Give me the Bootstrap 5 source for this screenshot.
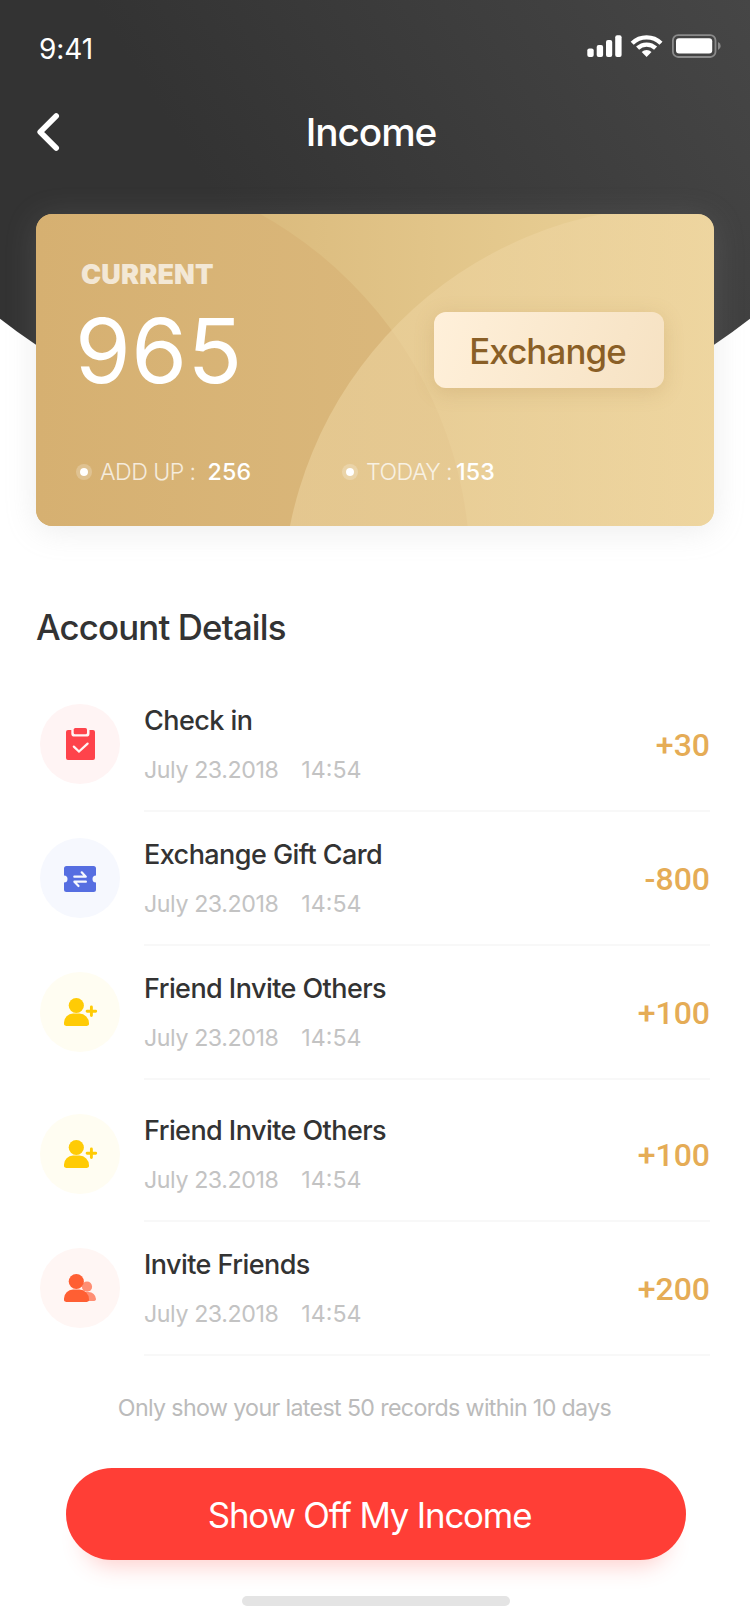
<!DOCTYPE html>
<html lang="en">
<head>
<meta charset="utf-8">
<meta name="viewport" content="width=device-width, initial-scale=1">
<title>Income</title>
<link href="https://cdn.jsdelivr.net/npm/bootstrap@5.3.0/dist/css/bootstrap.min.css" rel="stylesheet">
<style>
  body { font-family: Inter, "Liberation Sans", sans-serif; color: #333; background: #fff; }
  .screen { width: 750px; height: 1624px; }

  /* dark header with a curved lower edge */
  .hero { height: 448px; color: #fff; background: linear-gradient(238deg, #464646 0%, #333 64%); clip-path: circle(609px at 375px -161px); }
  .status-bar { padding: 29px 28px 0 39px; height: 104px; }
  .status-icons { margin-top: 3px; }
  .clock { font-size: 28px; line-height: 41px; letter-spacing: -.1px; }
  .title-bar { height: 56px; padding-left: 36px; }
  .page-title { font-size: 38.8px; line-height: 56px; font-weight: 500; letter-spacing: -1.04px; padding-right: 68px; }

  /* balance card */
  .balance { height: 312px; margin: -234px 36px 0; border: 0; border-radius: 16px; overflow: visible; color: #fff;
    background: linear-gradient(90deg, #d3af6f 0%, #ecd49b 100%); box-shadow: 0 4px 32px rgba(158,158,158,.2); }
  .balance-art { position: absolute; inset: 0; border-radius: 16px; }
  .balance-body { position: relative; padding: 45px 50px 0 39px; }
  .label-current { font-size: 27px; line-height: 32px; font-weight: 900; letter-spacing: .16px; opacity: .7; padding-left: 6px; margin-bottom: 10px; }
  .amount-now { font-size: 90px; line-height: 100px; font-weight: 400; letter-spacing: .5px; }
  .btn-exchange { width: 230px; height: 76px; margin-top: 53px; padding: 2px 3px 0 0; border: 0; border-radius: 12px; color: #8a5f26;
    font-size: 34.8px; line-height: 1; font-weight: 500; letter-spacing: -.84px;
    background: linear-gradient(108deg, #fff0da 0%, #f6e2c3 100%); box-shadow: 0 4px 20px rgba(170,130,70,.24); }
  .stats { margin-top: 56px; padding-left: 1px; font-size: 23.2px; line-height: 30px; }
  .stat { width: 266px; }
  .dot { width: 16px; height: 16px; border: 4px solid rgba(255,255,255,.22); background: #fff; background-clip: padding-box; margin-right: 8px; margin-top: -1px; }
  .stat-name { font-weight: 300; opacity: .75; letter-spacing: -.58px; }
  .stat-value { font-weight: 500; letter-spacing: .2px; }
  .stat-gap { margin-left: 12px; }

  /* account history */
  .section-title { margin: 79px 0 29px 36px; font-size: 34.8px; line-height: 44px; font-weight: 500; letter-spacing: -.84px; }
  .history { padding: 0 40px; }
  .entry { height: 134px; }
  .entry-late { margin-top: 8px; }
  .entry-icon { width: 80px; height: 80px; margin: 26px 24px 0 0; }
  .entry-main { height: 134px; border-bottom: 2px solid #f8f8f8; }
  .entry-name { font-size: 27px; line-height: 34px; font-weight: 500; letter-spacing: -.56px; margin: 1px 0 16.6px; }
  .entry-date { font-size: 23.2px; line-height: 30px; color: #c3c3c3; letter-spacing: -.42px; }
  .entry-date .time { letter-spacing: 0; margin-left: 23px; }
  .entry-sum { font-family: Roboto, sans-serif; font-size: 32px; line-height: 40px; font-weight: 500; color: #e5ac56; padding-top: 1px; }

  .note { margin: 37px 21px 45px 0; font-size: 23.2px; line-height: 30px; color: #bbb; letter-spacing: -.63px; }
  .btn-share { width: 620px; height: 92px; margin-left: 66px; padding: 2.5px 13px 0 0; border: 0; color: #fff; background: #ff3e36;
    font-size: 34.8px; line-height: 1; font-weight: 400; letter-spacing: -1.17px; box-shadow: 0 24px 22px -18px rgba(255,62,54,.25); }
  .home-bar { width: 268px; height: 10px; margin: 36px 0 0 242px; background: #e4e4e4; }
</style>
</head>
<body>
<main class="screen overflow-hidden">
  <header class="hero">
    <div class="status-bar d-flex justify-content-between align-items-start">
      <span class="clock">9:41</span>
      <svg class="status-icons" width="136" height="28" viewBox="586 32 136 28" fill="#fff">
        <rect x="587.3" y="48.6" width="6.4" height="8.4" rx="2"/>
        <rect x="596.7" y="45" width="6.4" height="12" rx="2"/>
        <rect x="606" y="40" width="6.2" height="17" rx="2"/>
        <rect x="615.2" y="35.2" width="6.4" height="21.8" rx="2"/>
        <g fill="none" stroke="#fff" stroke-width="4.4">
          <path d="M632.2 43.2A20.6 20.6 0 0 1 661 43.2"/>
          <path d="M637.6 48.2A13 13 0 0 1 655.6 48.2"/>
        </g>
        <path d="M646.6 57l-4.9-4.9a7 7 0 0 1 9.8 0z"/>
        <rect x="672.9" y="35.2" width="42.6" height="21.8" rx="5.2" fill="none" stroke="#8a8a8a" stroke-width="1.8"/>
        <rect x="676" y="38.2" width="36.2" height="15.4" rx="3"/>
        <path d="M718 42a4.3 4.3 0 0 1 0 8z" fill="#8a8a8a"/>
      </svg>
    </div>
    <div class="title-bar d-flex align-items-center">
      <svg class="flex-shrink-0" width="24" height="40" viewBox="36 112 24 40" fill="none" stroke="#fff" stroke-width="5.6" stroke-linecap="round" stroke-linejoin="round"><path d="M56.2 116L40.200 132l16 16"/></svg>
      <h1 class="page-title flex-grow-1 text-center mb-0">Income</h1>
    </div>
  </header>

  <section class="card balance">
    <svg class="balance-art" width="678" height="312" viewBox="0 0 678 312">
      <defs>
        <clipPath id="cardEdge"><rect width="678" height="312" rx="16"/></clipPath>
        <linearGradient id="discLeft" gradientUnits="userSpaceOnUse" x1="0" y1="0" x2="430" y2="0"><stop stop-color="#d6b071"/><stop offset="1" stop-color="#dbb97d"/></linearGradient>
        <linearGradient id="discRight" gradientUnits="userSpaceOnUse" x1="246" y1="0" x2="678" y2="0"><stop stop-color="#ead09b"/><stop offset="1" stop-color="#efd6a2"/></linearGradient>
      </defs>
      <g clip-path="url(#cardEdge)">
        <circle cx="26.2" cy="356.5" r="407.8" fill="url(#discLeft)"/>
        <circle cx="644.2" cy="390.2" r="398" fill="url(#discRight)" fill-opacity=".65"/>
      </g>
    </svg>
    <div class="balance-body">
      <div class="d-flex justify-content-between align-items-start">
        <div>
          <div class="label-current">CURRENT</div>
          <div class="amount-now">965</div>
        </div>
        <button type="button" class="btn btn-exchange">Exchange</button>
      </div>
      <div class="stats d-flex">
        <div class="stat d-flex align-items-center"><span class="dot rounded-circle"></span><span class="stat-name">ADD UP :</span><span class="stat-value stat-gap">256</span></div>
        <div class="stat d-flex align-items-center"><span class="dot rounded-circle"></span><span class="stat-name">TODAY :</span><span class="stat-value ms-1">153</span></div>
      </div>
    </div>
  </section>

  <h2 class="section-title">Account Details</h2>

  <section class="history">
    <div class="entry d-flex">
      <svg class="entry-icon flex-shrink-0" viewBox="0 0 80 80">
        <circle cx="40" cy="40" r="40" fill="#fff4f4"/>
        <path d="M28 26H31.3V29.4a3.2 3.2 0 0 0 3.2 3.2H46.3a3.2 3.2 0 0 0 3.2-3.2V26H53a2 2 0 0 1 2 2V54a2 2 0 0 1-2 2H28a2 2 0 0 1-2-2V28a2 2 0 0 1 2-2z" fill="#fe434b"/>
        <rect x="33.7" y="24" width="13.3" height="6.3" rx="1.6" fill="#fe434b"/>
        <path d="M33.8 42.6l5.2 5 8.6-8" fill="none" stroke="#fff4f4" stroke-width="2.2" stroke-linecap="round"/>
      </svg>
      <div class="entry-main flex-grow-1 d-flex justify-content-between align-items-center">
        <div><div class="entry-name">Check in</div><div class="entry-date">July 23.2018<span class="time">14:54</span></div></div>
        <div class="entry-sum">+30</div>
      </div>
    </div>

    <div class="entry d-flex">
      <svg class="entry-icon flex-shrink-0" viewBox="0 0 80 80">
        <circle cx="40" cy="40" r="40" fill="#f6f8fe"/>
        <path d="M26.5 28h27A2.5 2.5 0 0 1 56 30.5V37.6a3.5 3.5 0 0 0 0 7V51.5A2.5 2.5 0 0 1 53.5 54h-27A2.5 2.5 0 0 1 24 51.5V44.6a3.5 3.5 0 0 0 0-7V30.5A2.5 2.5 0 0 1 26.5 28z" fill="#566ee1"/>
        <path d="M34.3 38.7H45.8L41.7 34.3M45.9 43.7H34.4L38.5 48" fill="none" stroke="#f6f8fe" stroke-width="2.2" stroke-linecap="round" stroke-linejoin="round"/>
      </svg>
      <div class="entry-main flex-grow-1 d-flex justify-content-between align-items-center">
        <div><div class="entry-name">Exchange Gift Card</div><div class="entry-date">July 23.2018<span class="time">14:54</span></div></div>
        <div class="entry-sum">-800</div>
      </div>
    </div>

    <div class="entry d-flex">
      <svg class="entry-icon flex-shrink-0" viewBox="0 0 80 80">
        <circle cx="40" cy="40" r="40" fill="#fffdf2"/>
        <g fill="#ffcb05"><circle cx="36.3" cy="33.5" r="7.6"/><path d="M33 41.5h6.500a9.7 9.7 0 0 1 9.5 9.7V52q0 2-4 2H28q-4 0-4-2V50.5a9 9 0 0 1 9-9z"/></g>
        <path d="M51.4 35v8.6M47.1 39.3h8.6" stroke="#ffcb05" stroke-width="2.9" stroke-linecap="round"/>
      </svg>
      <div class="entry-main flex-grow-1 d-flex justify-content-between align-items-center">
        <div><div class="entry-name">Friend Invite Others</div><div class="entry-date">July 23.2018<span class="time">14:54</span></div></div>
        <div class="entry-sum">+100</div>
      </div>
    </div>

    <div class="entry entry-late d-flex">
      <svg class="entry-icon flex-shrink-0" viewBox="0 0 80 80">
        <circle cx="40" cy="40" r="40" fill="#fffdf2"/>
        <g fill="#ffcb05"><circle cx="36.3" cy="33.5" r="7.6"/><path d="M33 41.5h6.500a9.7 9.7 0 0 1 9.5 9.7V52q0 2-4 2H28q-4 0-4-2V50.5a9 9 0 0 1 9-9z"/></g>
        <path d="M51.4 35v8.6M47.1 39.3h8.6" stroke="#ffcb05" stroke-width="2.9" stroke-linecap="round"/>
      </svg>
      <div class="entry-main flex-grow-1 d-flex justify-content-between align-items-center">
        <div><div class="entry-name">Friend Invite Others</div><div class="entry-date">July 23.2018<span class="time">14:54</span></div></div>
        <div class="entry-sum">+100</div>
      </div>
    </div>

    <div class="entry d-flex">
      <svg class="entry-icon flex-shrink-0" viewBox="0 0 80 80">
        <circle cx="40" cy="40" r="40" fill="#fff6f4"/>
        <g fill="#ff8e73"><circle cx="47" cy="38.7" r="5.1"/><path d="M44 44h4.500a7.4 7.4 0 0 1 7.5 7q0 2-3 2H44z"/></g>
        <g fill="#ff5f33"><circle cx="36.3" cy="33.5" r="7.6"/><path d="M33 41.5h6.500a9.7 9.7 0 0 1 9.5 9.7V52q0 2-4 2H28q-4 0-4-2V50.5a9 9 0 0 1 9-9z"/></g>
      </svg>
      <div class="entry-main flex-grow-1 d-flex justify-content-between align-items-center">
        <div><div class="entry-name">Invite Friends</div><div class="entry-date">July 23.2018<span class="time">14:54</span></div></div>
        <div class="entry-sum">+200</div>
      </div>
    </div>
  </section>

  <p class="note text-center">Only show your latest 50 records within 10 days</p>
  <button type="button" class="btn btn-share rounded-pill d-block">Show Off My Income</button>
  <div class="home-bar rounded-pill"></div>
</main>
<script src="https://cdn.jsdelivr.net/npm/bootstrap@5.3.0/dist/js/bootstrap.bundle.min.js"></script>
</body>
</html>
